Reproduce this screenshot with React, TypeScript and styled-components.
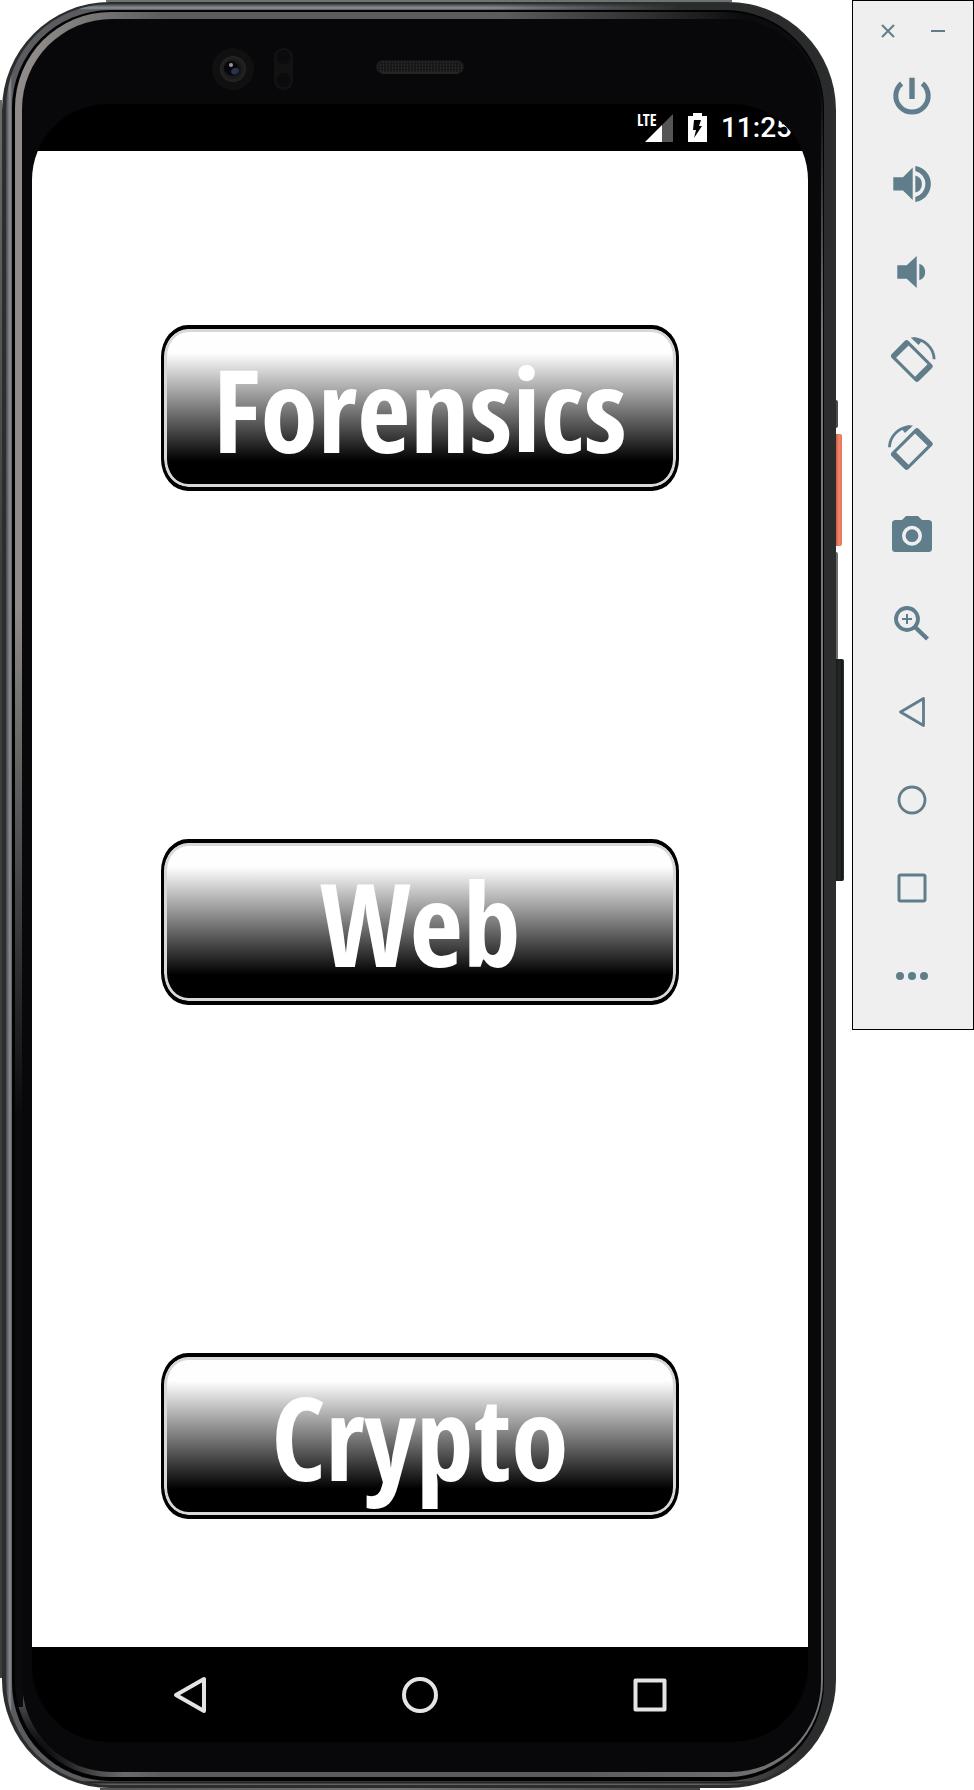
import React from "react";
import styled, { createGlobalStyle } from "styled-components";

const GlobalStyle = createGlobalStyle`
  *, *::before, *::after { box-sizing: border-box; }
  body { margin: 0; background: #fff; font-family: Roboto, "Liberation Sans", sans-serif; }
  button { margin: 0; padding: 0; border: 0; background: none; cursor: pointer; }
  svg { display: block; }
`;

const Page = styled.main`
  display: grid;
  grid-template-columns: minmax(0, 1fr) 122px;
  column-gap: 16px;
  align-items: start;
`;

/* ---- Device body ---- */

const Device = styled.section`
  position: relative;
  padding: 2px 0 2px 2px;
  background:
    linear-gradient(#6e7270, #6e7270) 106px 0 / calc(100% - 210px) 2px no-repeat,
    linear-gradient(to right, #555, #777 50%, #444) 100px 100% / calc(100% - 236px) 2px no-repeat,
    linear-gradient(#6a6c6b, #3b3e3d 30%, #3b3e3d) 0 100px / 2px calc(100% - 212px) no-repeat;
`;

const Shell = styled.div`
  padding: 2px 4px 3px;
  border-radius: 108px;
  background: #2c2e2e;
`;

const MetalEdge = styled.div`
  padding: 6px 8px 4px 6px;
  border-radius: 104px;
  background:
    radial-gradient(circle at 100% 0, #292b2c 150px, transparent 340px),
    linear-gradient(to right, transparent calc(100% - 130px), #2a2c2d calc(100% - 30px)),
    linear-gradient(to bottom, #3f4345, #8d9296 4px, #55595c 6px, transparent 7px, transparent calc(100% - 4px), #151515 calc(100% - 3px), #707070),
    linear-gradient(to right, #45484c, #8b8e93 4px, #5a5c60 6px);
`;

const Groove = styled.div`
  padding: 2px 1px 4px 3px;
  border-radius: 98px;
  background: #020202;
`;

const InnerEdge = styled.div`
  padding: 7px 2px 5px 7px;
  border-radius: 96px;
  background:
    radial-gradient(circle at 100% 0, #0c0c0e 80px, transparent 320px),
    radial-gradient(circle at 0 100%, #0c0c0e 40px, transparent 110px),
    linear-gradient(to bottom, transparent 35%, #0b0a0c 65%) 0 0 / 8px calc(100% - 70px) no-repeat,
    linear-gradient(to right, #8e8b8a 20px, #5c5c5c 150px, #5c5c5c 70%, #777);
`;

const Bezel = styled.div`
  padding: 0 13px 30px 10px;
  border-radius: 90px;
  background: #08080a;
`;

const SensorBar = styled.div`
  display: flex;
  align-items: flex-end;
  height: 85px;
  padding: 0 0 13px 180px;
`;

const SensorArt = styled.svg`
  flex: none;
`;

const Screen = styled.div`
  overflow: hidden;
  border-radius: 76px;
  background: #000;
`;

const StatusBar = styled.header`
  display: flex;
  justify-content: flex-end;
  align-items: center;
  height: 47px;
  padding: 1px 16px 0 0;
  color: #fff;
`;

const Signal = styled.div`
  display: flex;
  align-items: flex-start;
  height: 30px;
`;

const SignalLabel = styled.span`
  width: 8px;
  font: 700 16px/14px "Open Sans Condensed", "Open Sans", sans-serif;
  white-space: nowrap;
`;

const Clock = styled.time`
  margin-left: 14px;
  font-size: 28px;
  font-weight: 500;
  line-height: 34px;
`;

const Menu = styled.nav`
  display: grid;
  row-gap: 348px;
  padding: 174px 129px 128px;
  background: #fff;
`;

const CategoryButton = styled.button`
  display: flex;
  align-items: center;
  justify-content: center;
  height: 166px;
  border: solid #000;
  border-width: 4px 3px;
  border-radius: 27px / 32px;
  background: linear-gradient(to bottom, #fefefe 24px, #000 132px) padding-box, #000;
  box-shadow: inset 0 0 0 3px #d8d8d8;
  color: #fff;
  font-family: "Open Sans Condensed", "Open Sans", sans-serif;
  font-size: 116px;
  font-weight: 700;
  line-height: 158px;
`;

const NavBar = styled.footer`
  display: grid;
  grid-template-columns: repeat(3, 1fr);
  height: 95px;
  padding: 0 43px;
  color: #e4e4e4;
`;

const NavButton = styled.button`
  display: grid;
  place-items: center;
  color: inherit;
`;

const SideKey = styled.span<{ $top: number; $height: number; $width: number; $fill: string }>`
  position: absolute;
  left: 100%;
  top: ${(p) => p.$top}px;
  width: ${(p) => p.$width}px;
  height: ${(p) => p.$height}px;
  border-radius: 0 2px 2px 0;
  background: ${(p) => p.$fill};
`;

/* ---- Emulator toolbar ---- */

const Toolbar = styled.aside`
  display: flex;
  flex-direction: column;
  padding: 8px 0 9px;
  border: 1px solid #000;
  background: #efefef;
  color: #607d8b;
`;

const WindowControls = styled.div`
  display: flex;
  justify-content: center;
  height: 43px;
`;

const WindowButton = styled.button`
  display: grid;
  place-items: center;
  width: 50px;
  color: inherit;
`;

const ToolButton = styled.button`
  display: grid;
  place-items: center;
  height: 88px;
  padding-right: 2px;
  color: inherit;
`;

const Icon = ({ children }: { children: React.ReactNode }) => (
  <svg width="48" height="48" viewBox="0 0 48 48" fill="currentColor" aria-hidden="true">
    {children}
  </svg>
);

const RotateShape = () => (
  <>
    <path
      transform="translate(23.8 25.1) rotate(45)"
      fillRule="evenodd"
      d="M-16.4-11.9H16.4A2.8 2.8 0 0 1 19.2-9.1V9.1A2.8 2.8 0 0 1 16.4 11.9H-16.4A2.8 2.8 0 0 1-19.2 9.1V-9.1A2.8 2.8 0 0 1-16.4-11.9ZM-13.4-8.8V8.8H13.4V-8.8Z"
    />
    <path d="M25 2.6A21.5 21.5 0 0 1 46.2 23.2" fill="none" stroke="currentColor" strokeWidth="2.8" />
    <path d="M22.6 1.4L30.6 9L34.4 4.2L28 1.5Z" />
  </>
);

const tools: { label: string; art: React.ReactNode }[] = [
  {
    label: "Power",
    art: (
      <>
        <path d="M13.6 11.5A16.2 16.2 0 1 0 34.4 11.5" fill="none" stroke="currentColor" strokeWidth="5" />
        <rect x="21.3" y="5.7" width="5.4" height="21.3" />
      </>
    ),
  },
  {
    label: "Volume up",
    art: (
      <>
        <path d="M5.3 17.3H15L24.7 7.5V40L15 30.5H5.3Z" />
        <path d="M27.3 15.4A8.9 8.9 0 0 1 27.3 32.6Z" />
        <path d="M27.3 6A18.2 18.2 0 0 1 27.3 42V37A13.4 13.4 0 0 0 27.3 11Z" />
      </>
    ),
  },
  {
    label: "Volume down",
    art: (
      <>
        <path d="M9.3 17.3H18.7L28.7 8V40L18.7 30.7H9.3Z" />
        <path d="M31.3 15.7A8.8 8.8 0 0 1 31.3 32.3Z" />
      </>
    ),
  },
  { label: "Rotate left", art: <RotateShape /> },
  {
    label: "Rotate right",
    art: (
      <g transform="matrix(-1 0 0 1 47.6 0)">
        <RotateShape />
      </g>
    ),
  },
  {
    label: "Take screenshot",
    art: (
      <path
        fillRule="evenodd"
        d="M18 4H30L34 8H40.5A3.5 3.5 0 0 1 44 11.5V36.5A3.5 3.5 0 0 1 40.5 40H7.5A3.5 3.5 0 0 1 4 36.5V11.5A3.5 3.5 0 0 1 7.5 8H14ZM24 13.7A10 10 0 0 0 24 33.7A10 10 0 0 0 24 13.7ZM24 17.3A6.4 6.4 0 0 1 24 30.1A6.4 6.4 0 0 1 24 17.3Z"
      />
    ),
  },
  {
    label: "Zoom",
    art: (
      <g fill="none" stroke="currentColor">
        <circle cx="19" cy="19" r="11" strokeWidth="3.8" />
        <path d="M27.5 27.5L39.5 39" strokeWidth="4.4" />
        <path d="M14 19H24M19 14V24" strokeWidth="2" />
      </g>
    ),
  },
  {
    label: "Back",
    art: <path d="M12.5 24L35.5 10.5V37.5Z" fill="none" stroke="currentColor" strokeWidth="2.8" strokeLinejoin="round" />,
  },
  { label: "Home", art: <circle cx="24" cy="24" r="13" fill="none" stroke="currentColor" strokeWidth="2.8" /> },
  {
    label: "Overview",
    art: <rect x="11" y="11" width="26" height="26" rx="1.5" fill="none" stroke="currentColor" strokeWidth="3" />,
  },
  {
    label: "More",
    art: (
      <>
        <circle cx="12" cy="24" r="4" />
        <circle cx="24" cy="24" r="4" />
        <circle cx="36" cy="24" r="4" />
      </>
    ),
  },
];

const Sensors = () => (
  <SensorArt width="256" height="48" viewBox="0 0 256 48" aria-hidden="true">
    <defs>
      <radialGradient id="lens">
        <stop offset="0" stopColor="#0a0a12" />
        <stop offset="0.5" stopColor="#141416" />
        <stop offset="1" stopColor="#252526" />
      </radialGradient>
      <pattern id="mesh" width="3" height="3" patternUnits="userSpaceOnUse">
        <rect width="3" height="3" fill="#181818" />
        <rect width="1" height="2" fill="#2a2a2a" />
      </pattern>
    </defs>
    <circle cx="21" cy="26" r="21" fill="#101010" />
    <circle cx="21" cy="26" r="13" fill="url(#lens)" />
    <circle cx="19" cy="25" r="7" fill="#08080c" />
    <ellipse cx="23" cy="28" rx="4" ry="3" fill="#2c3350" transform="rotate(-25 23 28)" />
    <circle cx="19" cy="22" r="2" fill="#98989c" />
    <rect x="62" y="5" width="19" height="42" rx="9" fill="#121213" />
    <circle cx="71.5" cy="14" r="7" fill="#0b0b0d" />
    <circle cx="71.5" cy="37" r="7" fill="#0b0b0d" />
    <rect x="165" y="18" width="86" height="12" rx="5" fill="url(#mesh)" stroke="#202020" />
    <path d="M170 30H246" stroke="#333" />
  </SensorArt>
);

export default function App() {
  return (
    <>
      <GlobalStyle />
      <Page>
        <Device aria-label="Phone">
          <SideKey $top={400} $height={28} $width={2} $fill="#4a4c4c" />
          <SideKey $top={434} $height={112} $width={6} $fill="linear-gradient(to right, #d4573c, #f0896f 3px, #e5745a)" />
          <SideKey $top={552} $height={108} $width={2} $fill="#6a6c6c" />
          <SideKey $top={659} $height={222} $width={8} $fill="linear-gradient(to right, #1a1b1b, #272828 4px, #111 6px, #3a3a3a)" />
          <Shell>
            <MetalEdge>
              <Groove>
                <InnerEdge>
                  <Bezel>
                    <SensorBar>
                      <Sensors />
                    </SensorBar>
                    <Screen>
                      <StatusBar>
                        <Signal>
                          <SignalLabel>LTE</SignalLabel>
                          <svg width="28" height="30" viewBox="0 0 28 30" aria-hidden="true">
                            <path d="M0 29L17 12V29Z" fill="#fff" />
                            <path d="M17 12L28 1V29H17Z" fill="#555" />
                          </svg>
                        </Signal>
                        <svg width="34" height="30" viewBox="0 0 34 30" aria-label="Battery charging">
                          <path d="M15 3H20V0H29V3H34V29H15Z" fill="#fff" />
                          <path d="M21 7H28L26 13H29L21 25L23 17H20Z" fill="#000" />
                        </svg>
                        <Clock>11:25</Clock>
                      </StatusBar>
                      <Menu>
                        <CategoryButton type="button">Forensics</CategoryButton>
                        <CategoryButton type="button">Web</CategoryButton>
                        <CategoryButton type="button">Crypto</CategoryButton>
                      </Menu>
                      <NavBar>
                        <NavButton type="button" aria-label="Back">
                          <svg width="40" height="40" viewBox="0 0 40 40" fill="none" stroke="currentColor" strokeWidth="4" strokeLinejoin="round">
                            <path d="M6 20L34 4V36Z" />
                          </svg>
                        </NavButton>
                        <NavButton type="button" aria-label="Home">
                          <svg width="40" height="40" viewBox="0 0 40 40" fill="none" stroke="currentColor" strokeWidth="4">
                            <circle cx="20" cy="20" r="16" />
                          </svg>
                        </NavButton>
                        <NavButton type="button" aria-label="Overview">
                          <svg width="40" height="40" viewBox="0 0 40 40" fill="none" stroke="currentColor" strokeWidth="4" strokeLinejoin="round">
                            <rect x="5.5" y="5.5" width="29" height="29" />
                          </svg>
                        </NavButton>
                      </NavBar>
                    </Screen>
                  </Bezel>
                </InnerEdge>
              </Groove>
            </MetalEdge>
          </Shell>
        </Device>
        <Toolbar aria-label="Emulator controls">
          <WindowControls>
            <WindowButton type="button" aria-label="Close">
              <svg width="14" height="14" viewBox="0 0 14 14" stroke="currentColor" strokeWidth="2">
                <path d="M1 1L13 13M13 1L1 13" />
              </svg>
            </WindowButton>
            <WindowButton type="button" aria-label="Minimize">
              <svg width="14" height="14" viewBox="0 0 14 14" stroke="currentColor" strokeWidth="2">
                <path d="M0 7H14" />
              </svg>
            </WindowButton>
          </WindowControls>
          {tools.map((tool) => (
            <ToolButton key={tool.label} type="button" aria-label={tool.label}>
              <Icon>{tool.art}</Icon>
            </ToolButton>
          ))}
        </Toolbar>
      </Page>
    </>
  );
}
